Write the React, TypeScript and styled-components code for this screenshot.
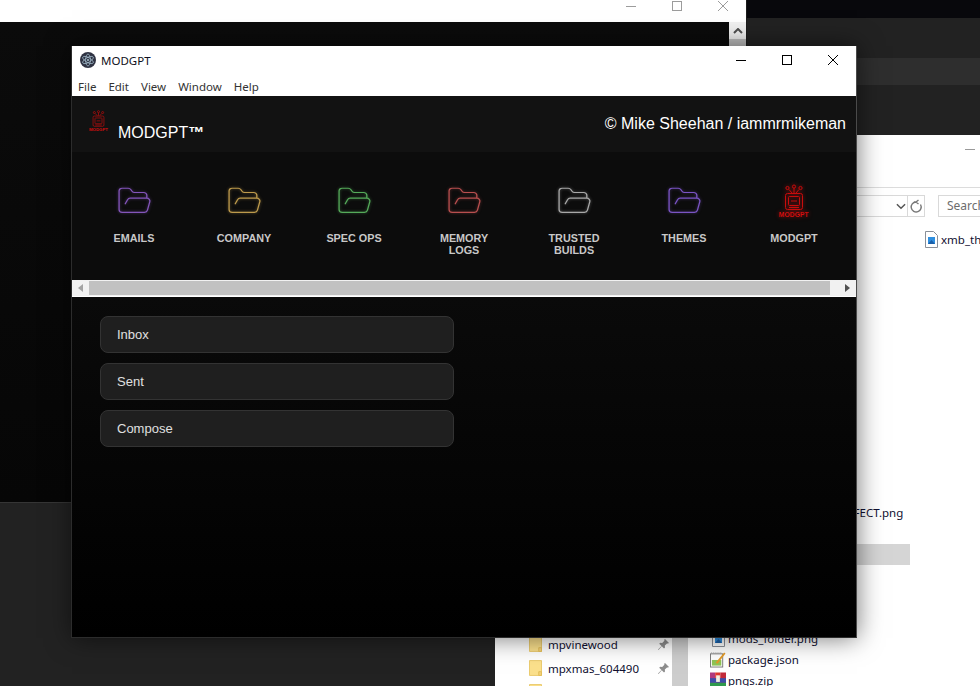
import type { ReactNode } from 'react';
import styled, { createGlobalStyle } from 'styled-components';

const GlobalStyle = createGlobalStyle`
  html, body {
    margin: 0;
    width: 980px;
    height: 686px;
    overflow: hidden;
    background: #222;
  }
  * { box-sizing: border-box; }
`;

const folders = [
  { label: 'EMAILS', color: '#8355ba' },
  { label: 'COMPANY', color: '#bd9a4c' },
  { label: 'SPEC OPS', color: '#55aa5a' },
  { label: 'MEMORY LOGS', color: '#b84f4f' },
  { label: 'TRUSTED BUILDS', color: '#a8a8a8' },
  { label: 'THEMES', color: '#7a54c4' },
];

const emailLinks = ['Inbox', 'Sent', 'Compose'];

const menuItems = ['File', 'Edit', 'View', 'Window', 'Help'];

const FolderIcon = ({ color }: { color: string }) => (
  <FolderSvg viewBox="0 0 24 24" preserveAspectRatio="none" fill="none" stroke={color} strokeWidth="0.85" strokeLinecap="round" strokeLinejoin="round" $glow={color}>
    <path d="m6 14 1.5-2.9A2 2 0 0 1 9.24 10H20a2 2 0 0 1 1.94 2.5l-1.54 6a2 2 0 0 1-1.95 1.5H4a2 2 0 0 1-2-2V5a2 2 0 0 1 2-2h3.9a2 2 0 0 1 1.69.9l.81 1.2a2 2 0 0 0 1.67.9H18a2 2 0 0 1 2 2v2" />
  </FolderSvg>
);

const ModLogo = ({ size, glow }: { size: number; glow?: boolean }) => (
  <LogoSvg viewBox="0 0 36 36" width={size} height={size} $glow={glow}>
    <g fill="none" stroke="#c80c0c" strokeWidth="1">
      <circle cx="11.5" cy="4" r="1.6" />
      <circle cx="18" cy="2.6" r="1.6" />
      <circle cx="24.5" cy="4" r="1.6" />
      <path d="M13 5.500l3 3.500M18 4.200V9M23 5.500l-3 3.500" />
      <rect x="9.500" y="9.500" width="17" height="16" rx="2" />
      <rect x="12.500" y="12.500" width="11" height="9" rx="1" />
      <path d="M15 17h6M13 23.500h10" />
    </g>
    <text x="18" y="33" textAnchor="middle" fill="#d80e0e" fontSize="6.8" fontWeight="700" fontFamily="'Liberation Sans', Arial, sans-serif">
      MODGPT
    </text>
  </LogoSvg>
);

const ElectronIcon = () => (
  <svg width="16" height="16" viewBox="0 0 16 16">
    <circle cx="8" cy="8" r="8" fill="#2f3242" />
    <g fill="none" stroke="#a9c3d2" strokeWidth="0.7">
      <ellipse cx="8" cy="8" rx="6" ry="2.4" transform="rotate(30 8 8)" />
      <ellipse cx="8" cy="8" rx="6" ry="2.4" transform="rotate(90 8 8)" />
      <ellipse cx="8" cy="8" rx="6" ry="2.4" transform="rotate(150 8 8)" />
    </g>
    <circle cx="8" cy="8" r="1" fill="#a9c3d2" />
  </svg>
);

const WindowControls = ({ faded }: { faded?: boolean }) => {
  const stroke = faded ? '#9c9c9c' : '#000';
  return (
    <Controls $faded={faded}>
      <ControlButton>
        <svg width="10" height="10" viewBox="0 0 10 10">
          <path d="M0 5.5h10" stroke={stroke} />
        </svg>
      </ControlButton>
      <ControlButton>
        <svg width="10" height="10" viewBox="0 0 10 10">
          <rect x="0.5" y="0.5" width="9" height="9" fill="none" stroke={stroke} />
        </svg>
      </ControlButton>
      <ControlButton>
        <svg width="10" height="10" viewBox="0 0 10 10">
          <path d="M0 0l10 10M10 0L0 10" stroke={stroke} />
        </svg>
      </ControlButton>
    </Controls>
  );
};

const PinIcon = () => (
  <svg width="13" height="13" viewBox="0 0 13 13">
    <path d="M8 1l4 4-1 .6-1-.2-2.2 2.2.2 2-1 1-2.2-2.4L1.5 12 1 11.500l3.500-3.500L2.200 5.800l1-1 2 .2L7.400 2.800 7.200 1.800z" fill="#8d8d8d" />
  </svg>
);

const TreeFolderIcon = () => (
  <svg width="13" height="16" viewBox="0 0 14 17">
    <path d="M0.500 0.500h13v16h-13z" fill="#fbe08c" stroke="#e8c766" />
    <path d="M10.500 12.500h3v4h-3z" fill="#f4d27a" stroke="#e2bd58" />
  </svg>
);

const ImageFileIcon = () => (
  <svg width="13" height="17" viewBox="0 0 13 17">
    <path d="M0.500 0.500h8l4 4v12h-12z" fill="#fff" stroke="#8a8f98" />
    <rect x="3" y="6" width="7" height="7" fill="#2f8fe0" />
    <path d="M3 13l3.500-4 3.500 4z" fill="#1b5fa8" />
  </svg>
);

const NotepadIcon = () => (
  <svg width="17" height="17" viewBox="0 0 17 17">
    <rect x="0.500" y="2.500" width="13" height="14" fill="#fff" stroke="#777" />
    <rect x="2" y="9" width="10" height="6" fill="#8fc454" />
    <path d="M1 1.500h12" stroke="#999" strokeDasharray="1 1" />
    <path d="M6 12L15 1l1.500 1L8 13z" fill="#e39a27" />
  </svg>
);

const ArchiveIcon = () => (
  <svg width="17" height="17" viewBox="0 0 17 17">
    <rect x="0" y="0" width="5.500" height="17" fill="#b03a7e" />
    <rect x="5.500" y="0" width="5.500" height="17" fill="#e0382e" />
    <rect x="11" y="0" width="6" height="17" fill="#c22a3a" />
    <rect x="0" y="6" width="17" height="5" fill="#3d4ea8" />
    <rect x="0" y="11" width="17" height="6" fill="#2f9a4c" />
    <rect x="6.500" y="3" width="4" height="7" fill="#f3efe2" />
  </svg>
);

const FileEntry = ({ icon, name, offset }: { icon: ReactNode; name: string; offset?: number }) => (
  <FileRow $offset={offset}>
    <FileIconCell>{icon}</FileIconCell>
    <FileName>{name}</FileName>
  </FileRow>
);

const App = () => {
  return (
    <Desktop>
      <GlobalStyle />
      <Band $height={18} $color="#08080c" />
      <Band $height={40} $color="#222" />
      <Band $height={27} $color="#2e2e2e" />

      <BackWindow>
        <BackTitleBar>
          <WindowControls faded />
        </BackTitleBar>
        <BackBody>
          <BackScrollbar>
            <BackArrow>
              <svg width="10" height="6" viewBox="0 0 10 6">
                <path d="M1 5l4-4 4 4" fill="none" stroke="#505050" strokeWidth="2" />
              </svg>
            </BackArrow>
            <BackThumb />
          </BackScrollbar>
        </BackBody>
      </BackWindow>

      <Explorer>
        <ExplorerTitle>
          <ExplorerMinimize />
        </ExplorerTitle>
        <ExplorerToolbar>
          <PathBox>
            <svg width="10" height="7" viewBox="0 0 11 7">
              <path d="M1 1l4.500 4.500L10 1" fill="none" stroke="#555" strokeWidth="1.600" />
            </svg>
            <RefreshCell>
              <svg width="14" height="15" viewBox="0 0 14 15">
                <path d="M11.500 5.500A5 5 0 1 1 7 3H5M7 3L9.500 1M7 3l2.500 2" fill="none" stroke="#777" strokeWidth="1.400" />
              </svg>
            </RefreshCell>
          </PathBox>
          <SearchBox>Search</SearchBox>
        </ExplorerToolbar>
        <ExplorerBody>
          <Sidebar>
            <TreeRow>
              <TreeFolderIcon />
              <TreeName>mpvinewood</TreeName>
              <PinIcon />
            </TreeRow>
            <TreeRow>
              <TreeFolderIcon />
              <TreeName>mpxmas_604490</TreeName>
              <PinIcon />
            </TreeRow>
            <TreeRow>
              <TreeFolderIcon />
            </TreeRow>
          </Sidebar>
          <SidebarScroll />
          <FileList>
            <FileColumn>
              <FileEntry offset={13} icon={<ImageFileIcon />} name="xmb_icons_sheet_i_PERFECT.png" />
              <FileRow $offset={1} $selected />
              <FileEntry offset={3} icon={<ImageFileIcon />} name="mods_folder.png" />
              <FileEntry icon={<NotepadIcon />} name="package.json" />
              <FileEntry icon={<ArchiveIcon />} name="pngs.zip" />
            </FileColumn>
            <FileColumn>
              <FileEntry icon={<ImageFileIcon />} name="xmb_theme.png" />
            </FileColumn>
          </FileList>
        </ExplorerBody>
      </Explorer>

      <MainWindow>
        <TitleBar>
          <TitleLabel>
            <ElectronIcon />
            <TitleText>MODGPT</TitleText>
          </TitleLabel>
          <WindowControls />
        </TitleBar>
        <MenuBar>
          {menuItems.map((item) => (
            <MenuItem key={item}>{item}</MenuItem>
          ))}
        </MenuBar>

        <AppHeader>
          <Brand>
            <ModLogo size={23} />
            <BrandName>
              MODGPT<TradeMark>™</TradeMark>
            </BrandName>
          </Brand>
          <Credit>© Mike Sheehan / iammrmikeman</Credit>
        </AppHeader>

        <FolderNav>
          {folders.map((folder) => (
            <FolderItem key={folder.label}>
              <FolderIcon color={folder.color} />
              <FolderLabel>{folder.label}</FolderLabel>
            </FolderItem>
          ))}
          <FolderItem>
            <ModLogo size={36} glow />
            <FolderLabel>MODGPT</FolderLabel>
          </FolderItem>
        </FolderNav>

        <HScrollbar>
          <ScrollArrow>
            <svg width="5" height="8" viewBox="0 0 5 8">
              <path d="M5 0v8L0 4z" fill="#a3a3a3" />
            </svg>
          </ScrollArrow>
          <ScrollThumb />
          <ScrollArrow>
            <svg width="5" height="8" viewBox="0 0 5 8">
              <path d="M0 0v8l5-4z" fill="#505050" />
            </svg>
          </ScrollArrow>
        </HScrollbar>

        <Content>
          {emailLinks.map((link) => (
            <LinkButton key={link}>{link}</LinkButton>
          ))}
        </Content>
      </MainWindow>
    </Desktop>
  );
};

export default App;

const Desktop = styled.div`
  position: relative;
  width: 980px;
  height: 686px;
  overflow: hidden;
  background: #222;
`;

const Band = styled.div<{ $height: number; $color: string }>`
  height: ${(p) => p.$height}px;
  background: ${(p) => p.$color};
`;

const BackWindow = styled.div`
  position: absolute;
  left: 0;
  top: 0;
  width: 747px;
  height: 503px;
  display: flex;
  flex-direction: column;
  border-right: 1px solid #1c1c1c;
  border-bottom: 1px solid #353535;
`;

const BackTitleBar = styled.div`
  height: 22px;
  flex-shrink: 0;
  display: flex;
  justify-content: flex-end;
  background: #fff;
`;

const BackBody = styled.div`
  flex: 1;
  display: flex;
  justify-content: flex-end;
  background: linear-gradient(#0b0b0b, #060606);
`;

const BackScrollbar = styled.div`
  width: 17px;
  background: #f1f1f1;
`;

const BackArrow = styled.div`
  height: 17px;
  display: flex;
  align-items: center;
  justify-content: center;
`;

const BackThumb = styled.div`
  height: 40px;
  background: #c1c1c1;
`;

const Controls = styled.div<{ $faded?: boolean }>`
  display: flex;
  height: ${(p) => (p.$faded ? '12px' : '28px')};
`;

const ControlButton = styled.div`
  width: 46px;
  display: flex;
  align-items: center;
  justify-content: center;
`;

const Explorer = styled.div`
  position: absolute;
  left: 495px;
  top: 135px;
  width: 600px;
  height: 551px;
  display: flex;
  flex-direction: column;
  overflow: hidden;
  background: #fff;
  font-family: 'Noto Sans', 'Open Sans', sans-serif;
  font-size: 11.5px;
  color: #101030;
`;

const ExplorerTitle = styled.div`
  height: 53px;
  flex-shrink: 0;
  padding: 14px 0 0 470px;
  border-bottom: 1px solid #dcdcdc;
`;

const ExplorerMinimize = styled.div`
  width: 10px;
  height: 1px;
  background: #9a9a9a;
`;

const ExplorerToolbar = styled.div`
  height: 35px;
  flex-shrink: 0;
  display: flex;
  align-items: flex-start;
  padding-top: 7px;
  gap: 13px;
`;

const PathBox = styled.div`
  width: 430px;
  height: 22px;
  display: flex;
  align-items: center;
  justify-content: flex-end;
  gap: 1px;
  border: 1px solid #d9d9d9;
`;

const RefreshCell = styled.div`
  width: 17px;
  height: 100%;
  display: flex;
  align-items: center;
  justify-content: center;
  border-left: 1px solid #d9d9d9;
`;

const SearchBox = styled.div`
  width: 150px;
  height: 22px;
  padding-left: 8px;
  font-size: 12px;
  line-height: 19px;
  color: #6d6d6d;
  border: 1px solid #d9d9d9;
`;

const ExplorerBody = styled.div`
  flex: 1;
  display: flex;
  min-height: 0;
`;

const Sidebar = styled.div`
  width: 177px;
  flex-shrink: 0;
  padding: 409px 0 0 34px;
`;

const TreeRow = styled.div`
  height: 24px;
  display: flex;
  align-items: center;
  gap: 6px;
  padding-right: 2px;
`;

const TreeName = styled.span`
  flex: 1;
`;

const SidebarScroll = styled.div`
  width: 16px;
  flex-shrink: 0;
  background: #cdcdcd;
`;

const FileList = styled.div`
  display: grid;
  grid-template-columns: 200px 200px;
  column-gap: 13px;
  padding: 6px 0 0 22px;
  align-items: start;
`;

const FileColumn = styled.div`
  display: flex;
  flex-direction: column;
`;

const FileRow = styled.div<{ $offset?: number; $selected?: boolean }>`
  height: 21px;
  flex-shrink: 0;
  margin-top: ${(p) => (p.$offset ?? 0) * 21}px;
  display: flex;
  align-items: center;
  gap: 2px;
  background: ${(p) => (p.$selected ? '#d5d5d5' : 'transparent')};
`;

const FileIconCell = styled.span`
  width: 16px;
  display: flex;
  justify-content: center;
`;

const FileName = styled.span`
  white-space: nowrap;
`;

const MainWindow = styled.div`
  position: absolute;
  left: 72px;
  top: 46px;
  width: 785px;
  height: 592px;
  display: flex;
  flex-direction: column;
  border-right: 1px solid #4a4a4a;
  border-bottom: 1px solid #2c2c2c;
  box-shadow: -1px 0 0 #2c2c2c, 0 0 24px rgba(0, 0, 0, 0.55);
`;

const TitleBar = styled.div`
  height: 28px;
  flex-shrink: 0;
  display: flex;
  justify-content: space-between;
  background: #fff;
`;

const TitleLabel = styled.div`
  display: flex;
  align-items: center;
  gap: 5px;
  padding-left: 8px;
`;

const TitleText = styled.span`
  font: 11.5px 'Noto Sans', 'Open Sans', sans-serif;
  color: #101020;
`;

const MenuBar = styled.div`
  height: 22px;
  flex-shrink: 0;
  display: flex;
  align-items: center;
  padding: 2px 0 0 6px;
  gap: 12px;
  background: #fff;
`;

const MenuItem = styled.span`
  font: 11.5px 'Noto Sans', 'Open Sans', sans-serif;
  color: #333;
`;

const AppHeader = styled.header`
  height: 56px;
  flex-shrink: 0;
  display: flex;
  align-items: center;
  justify-content: space-between;
  padding: 0 10px 0 15px;
  background: #121212;
`;

const Brand = styled.div`
  align-self: stretch;
  display: flex;
  gap: 8px;
  padding-top: 14px;
`;

const BrandName = styled.span`
  font: 16px 'Liberation Sans', Arial, sans-serif;
  color: #fff;
  padding-top: 14px;
`;

const TradeMark = styled.span`
  font-weight: 700;
`;

const Credit = styled.span`
  font: 16px 'Liberation Sans', Arial, sans-serif;
  color: #fff;
`;

const FolderNav = styled.nav`
  height: 128px;
  flex-shrink: 0;
  display: flex;
  padding: 32px 0 0 7px;
  background: #0c0c0c;
`;

const FolderItem = styled.div`
  width: 110px;
  flex-shrink: 0;
  display: flex;
  flex-direction: column;
  align-items: center;
  gap: 12px;
`;

const FolderSvg = styled.svg<{ $glow: string }>`
  width: 37px;
  height: 34px;
  margin-bottom: 2px;
  filter: drop-shadow(0 0 1.5px ${(p) => p.$glow}88);
`;

const LogoSvg = styled.svg<{ $glow?: boolean }>`
  flex-shrink: 0;
  filter: ${(p) => (p.$glow ? 'drop-shadow(0 0 2px rgba(255, 20, 20, 0.6))' : 'none')};
`;

const FolderLabel = styled.span`
  width: 76px;
  font: 700 10.8px/12px 'Liberation Sans', Arial, sans-serif;
  color: #c8c8c8;
  text-align: center;
`;

const HScrollbar = styled.div`
  height: 17px;
  flex-shrink: 0;
  display: flex;
  padding: 1px 0;
  background: #f1f1f1;
  border-bottom: 1px solid #fff;
`;

const ScrollArrow = styled.div`
  width: 17px;
  display: flex;
  align-items: center;
  justify-content: center;
`;

const ScrollThumb = styled.div`
  width: 741px;
  margin-right: 9px;
  background: #c1c1c1;
`;

const Content = styled.main`
  flex: 1;
  display: flex;
  flex-direction: column;
  align-items: flex-start;
  gap: 10px;
  padding: 19px 0 0 28px;
  background: linear-gradient(#0a0a0a, #000);
`;

const LinkButton = styled.div`
  width: 354px;
  height: 37px;
  padding-left: 16px;
  font: 13px/35px 'Liberation Sans', Arial, sans-serif;
  color: #e0e0e0;
  background: #1f1f1f;
  border: 1px solid #333;
  border-radius: 8px;
`;
